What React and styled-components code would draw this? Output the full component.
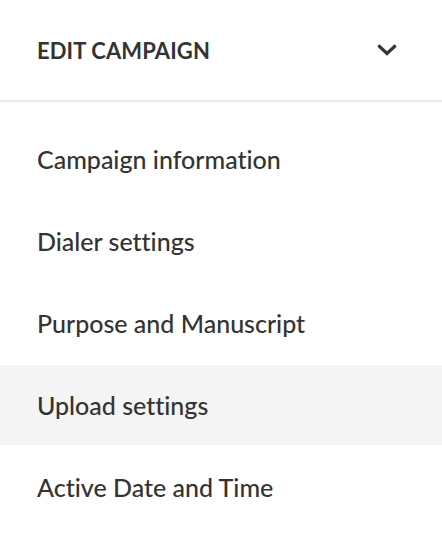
import React from "react";
import styled, { createGlobalStyle } from "styled-components";

const Global = createGlobalStyle`
  html, body { margin: 0; padding: 0; background: #fff; }
  body {
    font-family: Lato, "Open Sans", sans-serif;
    color: #333;
    font-variant-ligatures: none;
    font-feature-settings: "liga" 0, "clig" 0;
  }
`;

const Panel = styled.div`
  width: 442px;
  display: flex;
  flex-direction: column;
`;

const Header = styled.div`
  height: 100px;
  display: flex;
  align-items: center;
  justify-content: space-between;
  padding: 0 37px;
  border-bottom: 2px solid #e8e8e8;
`;

const Title = styled.h2`
  margin: 0;
  font-size: 22px;
  font-weight: 700;
  letter-spacing: 0.1px;
  color: #333;
`;

const Toggle = styled.button`
  border: 0;
  background: none;
  padding: 0;
  margin-right: 8px;
  display: flex;
  align-items: center;
  cursor: pointer;
`;

const Menu = styled.nav`
  display: flex;
  flex-direction: column;
  gap: 2px;
  padding-top: 17px;
`;

const Item = styled.a`
  height: 80px;
  display: flex;
  align-items: center;
  padding: 0 37px;
  font-size: 25px;
  font-weight: 500;
  color: #333;
  text-decoration: none;
  background: ${(p) => (p.$active ? "#f4f4f4" : "transparent")};
`;

const items = [
  "Campaign information",
  "Dialer settings",
  "Purpose and Manuscript",
  "Upload settings",
  "Active Date and Time",
];

export default function App() {
  return (
    <>
      <Global />
      <Panel>
        <Header>
          <Title>EDIT CAMPAIGN</Title>
          <Toggle aria-label="Collapse">
            <svg width="20" height="12" viewBox="0 0 20 12" fill="none">
              <path d="M2.5 2.5 L10 9.5 L17.5 2.5" stroke="#333" strokeWidth="3.2" strokeLinecap="square" />
            </svg>
          </Toggle>
        </Header>
        <Menu>
          {items.map((t) => (
            <Item key={t} $active={t === "Upload settings"}>{t}</Item>
          ))}
        </Menu>
      </Panel>
    </>
  );
}
